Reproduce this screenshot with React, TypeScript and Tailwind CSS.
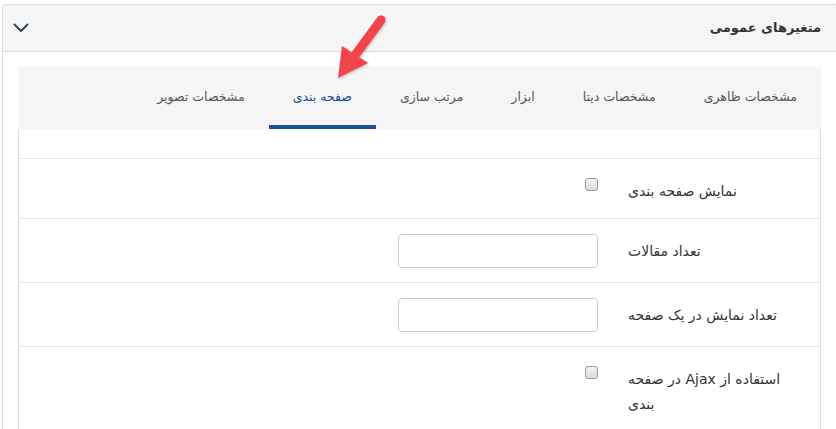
import React from "react";

const font = { fontFamily: '"DejaVu Sans", Tahoma, sans-serif' };

function Chevron() {
  return (
    <svg width="16" height="10" viewBox="0 0 16 10" className="block">
      <polyline points="1.5,1.5 8,8 14.5,1.5" fill="none" stroke="#2c3e50" strokeWidth="1.8" strokeLinecap="round" strokeLinejoin="round" />
    </svg>
  );
}

function Checkbox() {
  return <div className="mt-[4px] h-[13px] w-[13px] rounded-[3px] border border-[#9a9a9a] bg-gradient-to-b from-[#f2f2f2] to-[#dcdcdc]" />;
}

function TextInput() {
  return <input className="h-[34px] w-[200px] rounded-[4px] border border-[#cccccc] bg-white outline-none" />;
}

type Row = { label: string; control: "check" | "input" };

const rows: Row[] = [
  { label: "نمایش صفحه بندی", control: "check" },
  { label: "تعداد مقالات", control: "input" },
  { label: "تعداد نمایش در یک صفحه", control: "input" },
  { label: "استفاده از Ajax در صفحه بندی", control: "check" },
];

const tabs = ["مشخصات ظاهری", "مشخصات دیتا", "ابزار", "مرتب سازی", "صفحه بندی", "مشخصات تصویر"];

export default function App() {
  return (
    <div className="relative h-[429px] w-[836px] overflow-hidden bg-white" style={font}>
      <div className="ml-[2px] mt-[4px] w-[835px] rounded-t-[3px] border border-[#dddddd] bg-white">
        <div className="flex h-[47px] items-center justify-between border-b border-[#dddddd] bg-[#f5f5f5] pl-[10px] pr-[15px]">
          <Chevron />
          <div dir="rtl" className="text-[13px] font-bold text-[#333333]">متغیرهای عمومی</div>
        </div>
        <div className="p-[15px]">
          <div dir="rtl" className="flex h-[62px] bg-[#f5f5f5]">
            {tabs.map((t) => {
              const active = t === "صفحه بندی";
              return (
                <div
                  key={t}
                  className={
                    active
                      ? "flex h-full items-center border-b-4 border-[#1f4e9b] px-6 pt-[3px] text-[12.5px] text-[#1d4a94]"
                      : "flex h-full items-center px-6 pb-[1px] text-[12.5px] text-[#555555]"
                  }
                >
                  {t}
                </div>
              );
            })}
          </div>
          <div className="h-[400px] border-x border-[#dddddd]">
            <div className="h-[29px]" />
            {rows.map((r) => (
              <div key={r.label} className="flex justify-end gap-[30px] border-t border-[#e5e5e5] pb-[14px] pr-[37px] pt-[15px]">
                <div className="flex w-[200px] justify-end">
                  {r.control === "check" ? <Checkbox /> : <TextInput />}
                </div>
                <div dir="rtl" className="w-[155px] pt-[5px] text-left text-[14px] leading-[25px] text-[#333333]">
                  {r.label}
                </div>
              </div>
            ))}
          </div>
        </div>
      </div>
      <svg className="pointer-events-none absolute left-0 top-0" width="836" height="429" viewBox="0 0 836 429">
        <defs>
          <filter id="sh" x="-20%" y="-20%" width="140%" height="140%">
            <feDropShadow dx="1" dy="1" stdDeviation="1" floodColor="#000" floodOpacity="0.25" />
          </filter>
        </defs>
        <g filter="url(#sh)">
          <line x1="381" y1="20" x2="356" y2="54" stroke="#f2444b" strokeWidth="9" strokeLinecap="round" />
          <polygon points="338,78 342,46 368,63" fill="#f2444b" />
        </g>
      </svg>
    </div>
  );
}
